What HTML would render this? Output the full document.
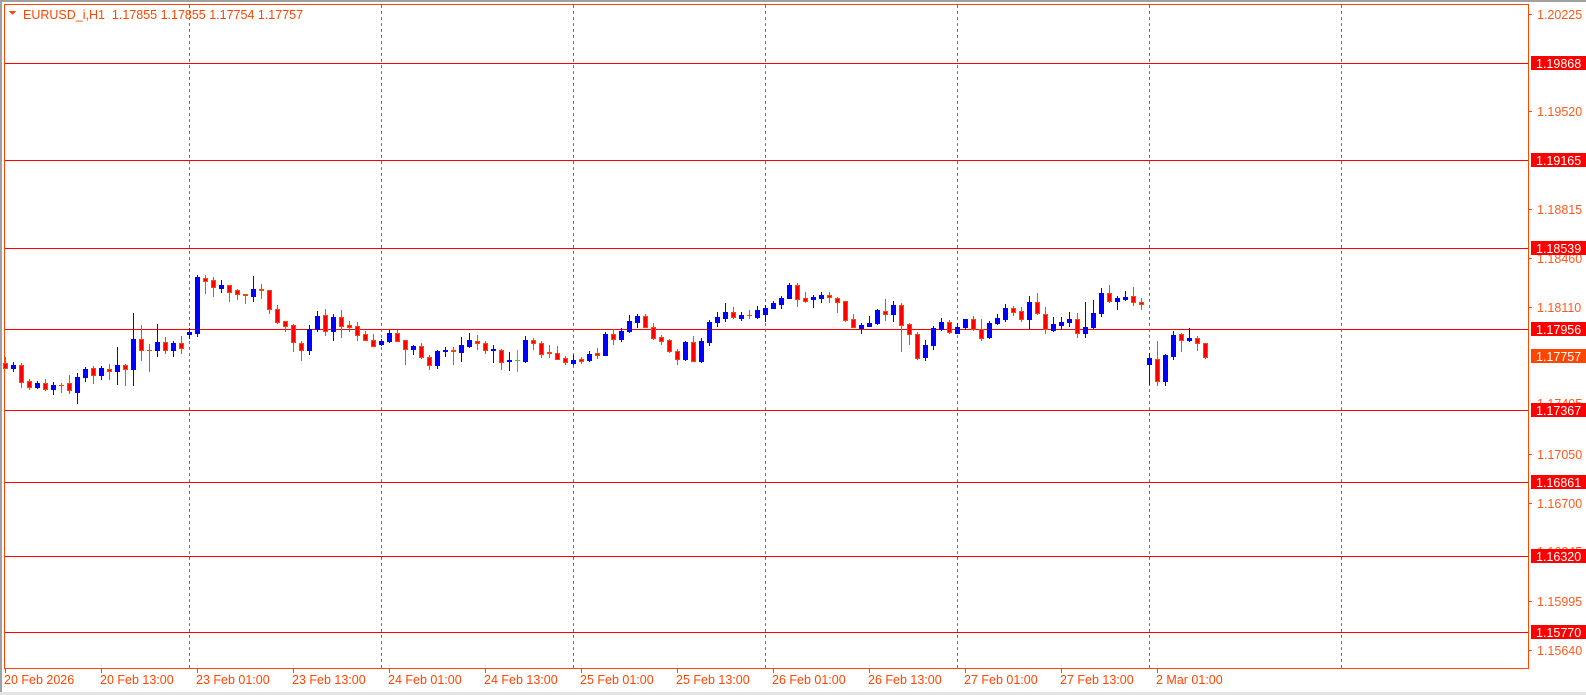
<!DOCTYPE html>
<html><head><meta charset="utf-8">
<style>
html,body{margin:0;padding:0;background:#fff;}
body{width:1586px;height:695px;overflow:hidden;position:relative;font-family:"Liberation Sans",sans-serif;}
svg{position:absolute;left:0;top:0;}
</style></head><body>
<svg id="c" width="1586" height="695" xmlns="http://www.w3.org/2000/svg" shape-rendering="crispEdges">
<rect x="0" y="0" width="1586" height="695" fill="#fff"/>
<rect x="0" y="0" width="1586" height="2" fill="#a0a0a0"/>
<rect x="0" y="0" width="2" height="695" fill="#a0a0a0"/>
<rect x="0" y="692" width="1586" height="3" fill="#e4e4e4"/>
<g stroke="#ff4500" stroke-width="1" stroke-dasharray="3,3">
<line x1="189.5" y1="5" x2="189.5" y2="669"/>
<line x1="381.5" y1="5" x2="381.5" y2="669"/>
<line x1="573.5" y1="5" x2="573.5" y2="669"/>
<line x1="765.5" y1="5" x2="765.5" y2="669"/>
<line x1="957.5" y1="5" x2="957.5" y2="669"/>
<line x1="1149.5" y1="5" x2="1149.5" y2="669"/>
<line x1="1341.5" y1="5" x2="1341.5" y2="669"/>
</g>
<g stroke="#ff0000" stroke-width="1">
<line x1="4" y1="63.5" x2="1529" y2="63.5"/>
<line x1="4" y1="160.5" x2="1529" y2="160.5"/>
<line x1="4" y1="248.5" x2="1529" y2="248.5"/>
<line x1="4" y1="329.5" x2="1529" y2="329.5"/>
<line x1="4" y1="410.5" x2="1529" y2="410.5"/>
<line x1="4" y1="482.5" x2="1529" y2="482.5"/>
<line x1="4" y1="556.5" x2="1529" y2="556.5"/>
<line x1="4" y1="632.5" x2="1529" y2="632.5"/>
</g>
<rect x="4.5" y="4.5" width="1524" height="664" fill="none" stroke="#ff4500" stroke-width="1"/>
<g id="cand"></g>
<polygon points="9,11 16,11 12.5,15" fill="#ff4500"/>
<text x="23" y="19" font-size="12.5" fill="#ff4500" font-family="Liberation Sans, sans-serif" shape-rendering="auto">EURUSD_i,H1&#160;&#160;1.17855 1.17855 1.17754 1.17757</text>
<g font-size="12.5" fill="#ff5a1e" font-family="Liberation Sans, sans-serif" shape-rendering="auto">
<text x="1537" y="19">1.20225</text>
<text x="1537" y="116">1.19520</text>
<text x="1537" y="214">1.18815</text>
<text x="1537" y="263">1.18460</text>
<text x="1537" y="312">1.18110</text>
<text x="1537" y="408">1.17405</text>
<text x="1537" y="459">1.17050</text>
<text x="1537" y="508">1.16700</text>
<text x="1537" y="556">1.16345</text>
<text x="1537" y="606">1.15995</text>
<text x="1537" y="655">1.15640</text>
</g>
<g fill="#ff4500">
<rect x="1529" y="14" width="3" height="1"/><rect x="1529" y="111" width="3" height="1"/>
<rect x="1529" y="209" width="3" height="1"/><rect x="1529" y="258" width="3" height="1"/>
<rect x="1529" y="307" width="3" height="1"/><rect x="1529" y="454" width="3" height="1"/>
<rect x="1529" y="503" width="3" height="1"/><rect x="1529" y="601" width="3" height="1"/>
<rect x="1529" y="650" width="3" height="1"/>
</g>
<g id="lbl" font-size="12.5" fill="#fff" font-family="Liberation Sans, sans-serif" shape-rendering="auto"></g>
<g font-size="12.5" fill="#ff4500" font-family="Liberation Sans, sans-serif" shape-rendering="auto" id="tl"></g>
</svg>
<script>
var NS="http://www.w3.org/2000/svg";
function el(p,t,a,txt){var e=document.createElementNS(NS,t);for(var k in a)e.setAttribute(k,a[k]);if(txt)e.textContent=txt;p.appendChild(e);return e;}
var D=[
['r',363,368,357,368],['b',365,368,362,371],['r',365,382,363,387],['r',381,387,379,389],['b',383,387,381,388],
['r',383,389,379,390],['b',385,389,382,394],['r',385,385,383,392],['r',383,390,375,393],['b',377,392,373,403],
['b',369,377,367,381],['r',368,375,366,383],['b',368,375,366,379],['r',369,371,364,379],['b',365,371,347,384],
['r',365,369,364,385],['b',339,369,313,385],['r',339,350,325,360],['r',350,350,344,371],['b',342,350,324,356],
['r',342,350,337,353],['b',343,350,341,356],['r',343,348,336,353],['b',332,334,328,338],['b',277,333,275,336],
['r',278,281,275,293],['r',280,287,277,296],['b',285,288,280,292],['r',285,292,285,301],['r',290,294,289,299],
['r',294,295,294,303],['b',289,296,276,301],['r',289,290,284,298],['r',290,309,290,313],['r',309,322,305,323],
['r',321,326,321,331],['r',325,342,324,351],['r',343,350,341,360],['b',329,350,325,354],['b',316,329,311,331],
['r',315,331,309,335],['b',317,331,314,340],['r',317,326,310,337],['r',325,327,321,331],['r',326,335,322,340],
['r',334,340,331,340],['r',340,346,334,346],['b',341,344,339,345],['b',333,341,330,342],['r',333,341,330,341],
['r',340,349,340,364],['b',346,349,345,354],['r',346,357,343,358],['r',357,365,355,369],['b',351,365,350,368],
['b',350,351,347,356],['r',350,351,347,364],['b',345,352,337,361],['b',340,346,333,347],['r',341,343,335,349],
['r',343,350,341,353],['b',349,350,345,362],['r',350,362,349,369],['b',360,361,352,370],['g',360,360,350,371],
['b',340,361,336,362],['r',340,343,338,349],['r',343,354,341,357],['r',352,353,345,357],['r',353,359,346,359],
['r',358,362,356,364],['b',360,363,355,364],['r',359,361,357,363],['b',354,360,351,361],['r',353,355,348,358],
['b',334,355,332,355],['r',334,339,329,344],['b',331,339,328,341],['b',321,331,315,332],['b',316,322,314,327],
['r',316,327,314,327],['r',327,338,323,339],['r',337,341,335,344],['r',340,351,339,352],['r',351,359,349,364],
['b',342,359,341,360],['r',342,361,336,361],['b',341,361,338,362],['b',322,342,320,345],['b',317,322,312,326],
['b',312,318,303,321],['r',312,317,307,318],['b',315,318,312,320],['r',315,315,310,318],['b',310,317,306,318],
['b',308,314,305,321],['b',303,308,301,308],['b',298,304,296,308],['b',285,298,283,298],['r',285,299,283,306],
['r',298,301,292,302],['b',297,299,295,307],['b',295,298,292,302],['r',295,297,292,302],['r',298,302,297,312],
['r',301,320,301,321],['r',319,327,314,327],['b',325,328,323,333],['b',323,326,316,326],['b',310,323,309,324],
['r',311,314,299,320],['b',305,314,301,321],['r',305,325,303,351],['r',324,334,323,344],['r',334,358,332,359],
['b',345,357,340,360],['b',328,345,326,349],['b',322,329,318,330],['r',322,332,320,333],['b',327,333,323,333],
['b',319,327,319,329],['r',319,329,316,330],['r',329,338,319,340],['b',323,337,321,338],['b',318,323,314,324],
['b',308,319,304,321],['r',308,312,306,315],['r',311,319,307,321],['b',302,319,296,328],['r',302,313,293,314],
['r',314,329,307,333],['b',324,330,317,331],['b',322,325,317,329],['b',319,322,312,326],['r',319,333,313,337],
['b',327,333,302,337],['b',313,327,300,328],['b',293,313,288,316],['r',293,301,285,302],['b',298,301,296,309],
['b',297,299,291,300],['r',296,302,287,305],['r',302,304,298,309],['b',358,364,353,384],['r',359,381,341,385],
['b',355,381,354,385],['b',335,356,331,359],['r',334,340,333,351],['b',338,340,328,341],['r',338,343,336,350],
['r',343,357,343,358]
];
var g=document.getElementById('cand');
D.forEach(function(d,i){
  var cx=5+8*i, c=d[0];
  var wc=c=='b'?'#0000ff':(c=='g'?'#32cd32':'#ff4500');
  el(g,'rect',{x:cx,y:d[3],width:1,height:Math.max(1,d[4]-d[3]+1),fill:wc});
  var h=d[2]-d[1];
  if(h<=0){el(g,'rect',{x:cx-2,y:d[1],width:5,height:1,fill:wc});}
  else if(c=='b'){el(g,'rect',{x:cx-2,y:d[1],width:5,height:h+1,fill:'#0000ff'});}
  else{el(g,'rect',{x:cx-2,y:d[1],width:5,height:h+1,fill:'#ff4500'});
       if(h>1)el(g,'rect',{x:cx-1,y:d[1]+1,width:3,height:h-1,fill:'#ff0000'});}
});
var L=document.getElementById('lbl');
[[63,'1.19868','#ff0000'],[160,'1.19165','#ff0000'],[248,'1.18539','#ff0000'],[329,'1.17956','#ff0000'],
 [356,'1.17757','#ff4500'],[410,'1.17367','#ff0000'],[482,'1.16861','#ff0000'],[556,'1.16320','#ff0000'],[632,'1.15770','#ff0000']
].forEach(function(a){
  el(L,'rect',{x:1531,y:a[0]-7,width:55,height:14,fill:a[2]});
  el(L,'text',{x:1536,y:a[0]+5},a[1]);
});
var T=document.getElementById('tl');
['20 Feb 2026','20 Feb 13:00','23 Feb 01:00','23 Feb 13:00','24 Feb 01:00','24 Feb 13:00','25 Feb 01:00','25 Feb 13:00','26 Feb 01:00','26 Feb 13:00','27 Feb 01:00','27 Feb 13:00','2 Mar 01:00'].forEach(function(s,i){
  var x=5+96*i;
  el(T,'rect',{x:x,y:669,width:1,height:4,fill:'#ff4500'});
  el(T,'text',{x:x-1,y:684},s);
});
</script>
</body></html>
